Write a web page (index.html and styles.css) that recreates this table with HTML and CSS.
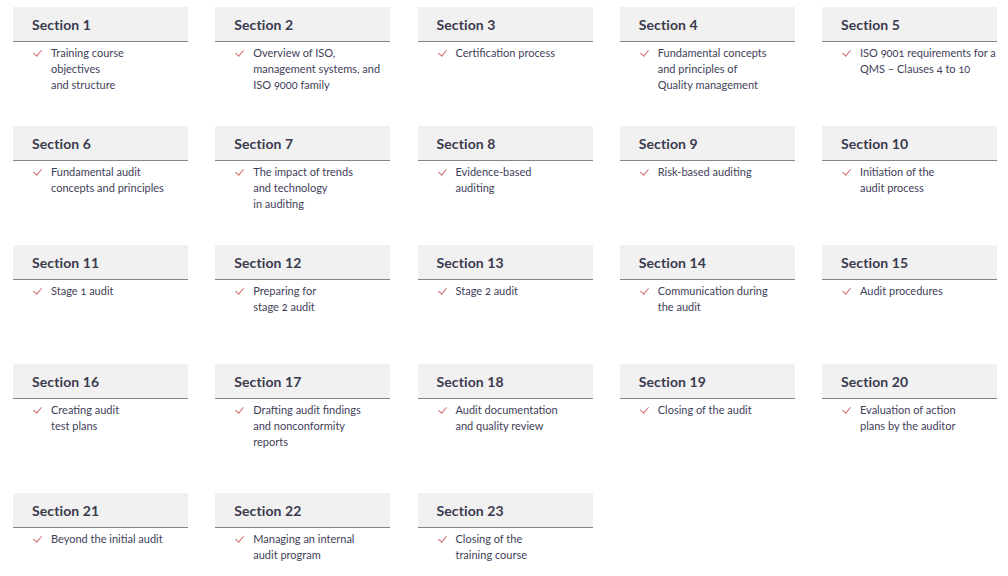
FILE: index.html
```html
<!DOCTYPE html>
<html>
<head>
<meta charset="utf-8">
<link rel="stylesheet" href="styles.css">
</head>
<body>
<div class="grid">
  <div class="card"><div class="head">Section 1</div><div class="item"><span class="chk"></span><p>Training course<br>objectives<br>and structure</p></div></div>
  <div class="card"><div class="head">Section 2</div><div class="item"><span class="chk"></span><p>Overview of ISO,<br>management systems, and<br>ISO 9000 family</p></div></div>
  <div class="card"><div class="head">Section 3</div><div class="item"><span class="chk"></span><p>Certification process</p></div></div>
  <div class="card"><div class="head">Section 4</div><div class="item"><span class="chk"></span><p>Fundamental concepts<br>and principles of<br>Quality management</p></div></div>
  <div class="card"><div class="head">Section 5</div><div class="item"><span class="chk"></span><p>ISO 9001 requirements for a<br>QMS – Clauses 4 to 10</p></div></div>

  <div class="card"><div class="head">Section 6</div><div class="item"><span class="chk"></span><p>Fundamental audit<br>concepts and principles</p></div></div>
  <div class="card"><div class="head">Section 7</div><div class="item"><span class="chk"></span><p>The impact of trends<br>and technology<br>in auditing</p></div></div>
  <div class="card"><div class="head">Section 8</div><div class="item"><span class="chk"></span><p>Evidence-based<br>auditing</p></div></div>
  <div class="card"><div class="head">Section 9</div><div class="item"><span class="chk"></span><p>Risk-based auditing</p></div></div>
  <div class="card"><div class="head">Section 10</div><div class="item"><span class="chk"></span><p>Initiation of the<br>audit process</p></div></div>

  <div class="card"><div class="head">Section 11</div><div class="item"><span class="chk"></span><p>Stage 1 audit</p></div></div>
  <div class="card"><div class="head">Section 12</div><div class="item"><span class="chk"></span><p>Preparing for<br>stage 2 audit</p></div></div>
  <div class="card"><div class="head">Section 13</div><div class="item"><span class="chk"></span><p>Stage 2 audit</p></div></div>
  <div class="card"><div class="head">Section 14</div><div class="item"><span class="chk"></span><p>Communication during<br>the audit</p></div></div>
  <div class="card"><div class="head">Section 15</div><div class="item"><span class="chk"></span><p>Audit procedures</p></div></div>

  <div class="card"><div class="head">Section 16</div><div class="item"><span class="chk"></span><p>Creating audit<br>test plans</p></div></div>
  <div class="card"><div class="head">Section 17</div><div class="item"><span class="chk"></span><p>Drafting audit findings<br>and nonconformity<br>reports</p></div></div>
  <div class="card"><div class="head">Section 18</div><div class="item"><span class="chk"></span><p>Audit documentation<br>and quality review</p></div></div>
  <div class="card"><div class="head">Section 19</div><div class="item"><span class="chk"></span><p>Closing of the audit</p></div></div>
  <div class="card"><div class="head">Section 20</div><div class="item"><span class="chk"></span><p>Evaluation of action<br>plans by the auditor</p></div></div>

  <div class="card"><div class="head">Section 21</div><div class="item"><span class="chk"></span><p>Beyond the initial audit</p></div></div>
  <div class="card"><div class="head">Section 22</div><div class="item"><span class="chk"></span><p>Managing an internal<br>audit program</p></div></div>
  <div class="card"><div class="head">Section 23</div><div class="item"><span class="chk"></span><p>Closing of the<br>training course</p></div></div>
</div>
</body>
</html>
```
FILE: styles.css
```css
* { box-sizing: border-box; }
html, body { margin: 0; padding: 0; background: #fff; }
body {
  font-family: "Lato", "Open Sans", sans-serif;
  color: #3b3d54;
  width: 1008px;
  height: 576px;
  overflow: hidden;
}
.grid {
  display: grid;
  grid-template-columns: repeat(5, 175px);
  grid-template-rows: 119px 119px 119px 129px auto;
  column-gap: 27.25px;
  padding: 7px 13px 0 13px;
}
.card { display: flex; flex-direction: column; }
.head {
  background: #f1f1f1;
  height: 35px;
  border-bottom: 1.5px solid #858585;
  padding-left: 19px;
  display: flex;
  align-items: center;
  font-weight: 700;
  font-size: 14px;
  color: #3a3a4e;
  letter-spacing: 0.1px;
}
.item {
  display: flex;
  align-items: flex-start;
  padding: 3px 0 0 20px;
}
.chk {
  flex: none;
  width: 9px;
  height: 16px;
  margin-right: 9px;
  position: relative;
}
.chk::after {
  content: "";
  position: absolute;
  left: 2px;
  top: 3px;
  width: 4px;
  height: 7px;
  border-right: 1px solid #d2696c;
  border-bottom: 1px solid #d2696c;
  transform: rotate(40deg);
}
.item p {
  margin: 0;
  font-size: 11px;
  line-height: 16px;
  color: #3f415a;
  white-space: nowrap;
  font-variant-numeric: oldstyle-nums;
}
```
